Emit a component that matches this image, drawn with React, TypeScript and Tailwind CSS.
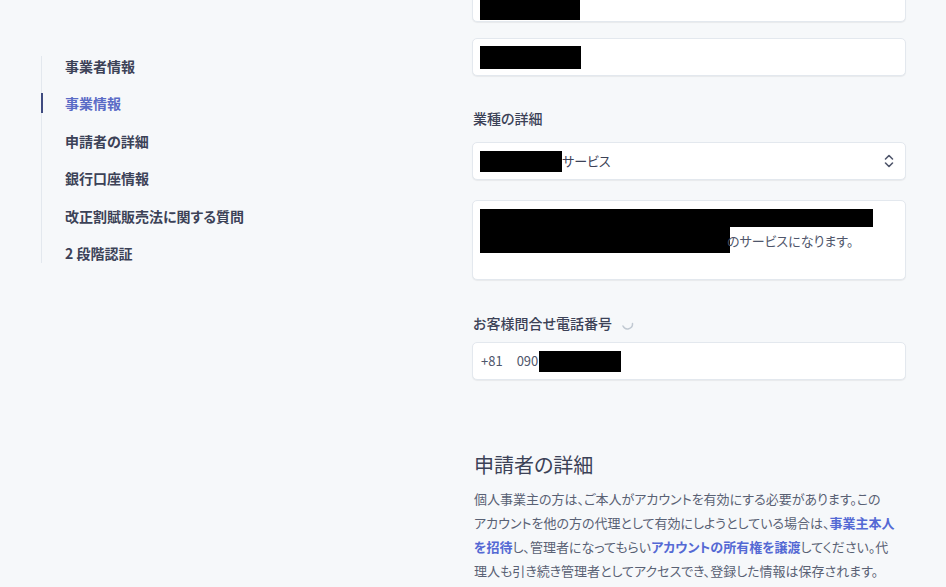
import React from 'react';

const navItems = [
  '事業者情報',
  '事業情報',
  '申請者の詳細',
  '銀行口座情報',
  '改正割賦販売法に関する質問',
  '2 段階認証',
];

const Redact = ({ className }: { className: string }) => (
  <span className={`shrink-0 bg-black ${className}`} />
);

const inputBox =
  'rounded-[5px] border border-[#e3e8ee] bg-white shadow-[0_1px_1px_rgba(0,0,0,0.06)]';

const Link = ({ children }: { children: React.ReactNode }) => (
  <a className="font-semibold text-[#5469d4]">{children}</a>
);

const App: React.FC = () => {
  return (
    <div
      className="h-[587px] w-[946px] overflow-hidden bg-[#f6f8fa] text-[#3c4257] [font-feature-settings:'palt']"
      style={{ fontFamily: '"Noto Sans CJK JP", "Noto Sans", sans-serif' }}
    >
      <div className="flex pl-[41px]">
        {/* side nav */}
        <nav className="w-[431px] shrink-0 pt-[56px]">
          <ul className="flex flex-col gap-[17.4px] border-l border-[#e3e8ee]">
            {navItems.map((item, i) => (
              <li
                key={item}
                className={`-ml-px h-5 border-l-2 pl-[22px] text-[14px] leading-5 font-semibold ${
                  i === 1
                    ? 'border-[#3f4b80] text-[#5a6bc6]'
                    : 'border-transparent text-[#3c4257]'
                }`}
              >
                {item}
              </li>
            ))}
          </ul>
        </nav>

        {/* form column */}
        <div className="-mt-[16px] w-[434px] shrink-0">
          <div className={`flex h-[38px] items-center pl-[7px] ${inputBox}`}>
            <Redact className="mt-[14px] h-[20px] w-[100px]" />
          </div>
          <div className={`mt-[16px] flex h-[38px] items-center pl-[7px] ${inputBox}`}>
            <Redact className="h-[23px] w-[101px]" />
          </div>

          <label className="mt-[32px] block pl-[1px] text-[14px] leading-5 font-medium">
            業種の詳細
          </label>
          <div
            className={`mt-[14px] flex h-[38px] items-center justify-between pr-[11px] pl-[7px] ${inputBox}`}
          >
            <div className="flex items-center text-[13px] text-[#3c4257]">
              <Redact className="h-[21px] w-[82px]" />
              <span>サービス</span>
            </div>
            <svg width="10" height="14" viewBox="0 0 10 14" fill="none">
              <path
                d="M1.5 5 L5 1.5 L8.5 5 M1.5 9 L5 12.5 L8.5 9"
                stroke="#4f566b"
                strokeWidth="1.6"
                strokeLinecap="round"
                strokeLinejoin="round"
              />
            </svg>
          </div>

          <div className={`mt-[20px] flex h-[80px] flex-col pt-[8px] pl-[7px] ${inputBox}`}>
            <Redact className="h-[18px] w-[393px]" />
            <div className="flex items-end text-[13px] text-[#4f566b]">
              <Redact className="h-[26px] w-[250px]" />
              <span className="-ml-[3px] leading-[24px]">のサービスになります。</span>
            </div>
          </div>

          <div className="mt-[33px] flex items-center gap-[9px] pl-[1px]">
            <span className="text-[14px] leading-5 font-medium">お客様問合せ電話番号</span>
            <svg width="13" height="13" viewBox="0 0 13 13" fill="none">
              <path
                d="M11.5 6.5 A5 5 0 0 1 2 9"
                stroke="#c1c9d2"
                strokeWidth="1.5"
                strokeLinecap="round"
              />
            </svg>
          </div>
          <div
            className={`mt-[9px] flex h-[38px] items-center pl-[8px] text-[13px] text-[#4f566b] ${inputBox}`}
          >
            <span>+81</span>
            <span className="ml-[14px]">090</span>
            <Redact className="ml-[1px] h-[21px] w-[82px]" />
          </div>

          <h2 className="mt-[71px] pl-[2px] text-[20px] leading-7 font-normal text-[#3c4257]">
            申請者の詳細
          </h2>
          <p className="mt-[8px] pl-[2px] text-[13px] leading-6 whitespace-nowrap text-[#596174]">
            個人事業主の方は、ご本人がアカウントを有効にする必要があります。この
            <br />
            アカウントを他の方の代理として有効にしようとしている場合は、<Link>事業主本人</Link>
            <br />
            <Link>を招待</Link>し、管理者になってもらい<Link>アカウントの所有権を譲渡</Link>
            してください。代
            <br />
            理人も引き続き管理者としてアクセスでき、登録した情報は保存されます。
          </p>
        </div>
      </div>
    </div>
  );
};

export default App;
